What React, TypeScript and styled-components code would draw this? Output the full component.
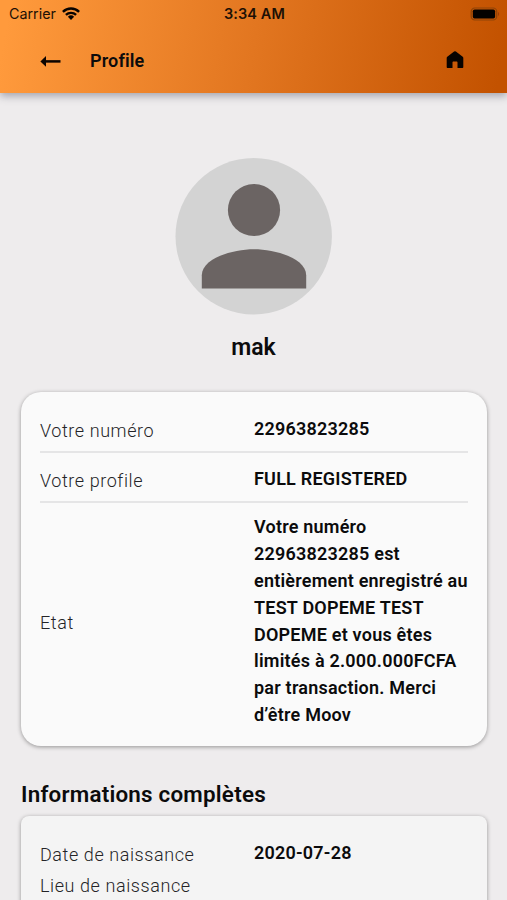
import React from 'react';
import styled, { createGlobalStyle } from 'styled-components';

const GlobalStyle = createGlobalStyle`
  *, *::before, *::after { box-sizing: border-box; }
  html, body { margin: 0; padding: 0; height: 100%; overflow: hidden; }
  body { background: #eeeced; font-family: Roboto, sans-serif; color: #0b0b0c; }
  #root { height: 100%; }
`;

const Screen = styled.div`
  height: 900px;
  display: flex;
  flex-direction: column;
  overflow: hidden;
  background: #eeeced;
`;

const TopBar = styled.header`
  flex: none;
  height: 93px;
  background: linear-gradient(100deg, #ff9a3c 2%, #e27620 50%, #c35200 98%);
  box-shadow: 0 3px 8px rgba(60, 60, 80, 0.42);
`;

const StatusBar = styled.div`
  height: 27px;
  padding: 0 7px 0 9px;
  display: grid;
  grid-template-columns: 1fr auto 1fr;
  align-items: center;
  font-family: Inter, sans-serif;
  color: #1d1005;
`;

const Carrier = styled.div`
  display: flex;
  align-items: center;
  gap: 6px;
  font-size: 14.3px;
`;

const Clock = styled.div`
  font-size: 14.5px;
  font-weight: 600;
  letter-spacing: 0.1px;
`;

const Battery = styled.svg`
  justify-self: end;
`;

const NavBar = styled.nav`
  height: 66px;
  padding: 0 43px 1px 40px;
  display: flex;
  align-items: center;
`;

const Title = styled.h1`
  margin: 1px auto 0 29px;
  font-size: 18px;
  line-height: 25px;
  font-weight: 600;
  letter-spacing: 0.15px;
`;

const Hero = styled.section`
  flex: none;
  height: 299px;
  padding-top: 65px;
  display: flex;
  flex-direction: column;
  align-items: center;
`;

const UserName = styled.h2`
  margin: 18px 0 0;
  font-size: 23px;
  line-height: 30px;
  font-weight: 600;
`;

const Card = styled.section<{ $compact?: boolean }>`
  flex: none;
  margin: 0 20px 0 21px;
  padding: ${(p) => (p.$compact ? '21px 19px 40px' : '11px 19px 0')};
  height: ${(p) => (p.$compact ? '160px' : '354px')};
  border-radius: ${(p) => (p.$compact ? '8px' : '20px')};
  background: ${(p) => (p.$compact ? '#f4f4f4' : '#fafafa')};
  box-shadow: 0 1px 4px rgba(0, 0, 0, 0.38);
`;

const Row = styled.div<{ $height: number; $divided?: boolean }>`
  height: ${(p) => p.$height}px;
  padding-top: ${(p) => (p.$divided ? '3px' : '0')};
  display: grid;
  grid-template-columns: 214px 1fr;
  align-items: center;
  border-bottom: ${(p) => (p.$divided ? '2px solid #e5e5e6' : '0')};
`;

const Label = styled.div`
  padding-top: 3px;
  font-size: 18px;
  line-height: 27px;
  font-weight: 300;
  letter-spacing: 0.58px;
  color: #242427;
`;

const Value = styled.div`
  padding-top: 2px;
  font-size: 18px;
  line-height: 26.9px;
  font-weight: 600;
  letter-spacing: 0.22px;
  white-space: pre;
`;

const SectionTitle = styled.h2`
  flex: none;
  margin: 33px 21px 7px;
  font-size: 22.4px;
  line-height: 30px;
  font-weight: 600;
  letter-spacing: 0.22px;
`;

const WifiIcon = () => (
  <svg width="18" height="14" viewBox="0 0 18 14" aria-hidden="true">
    <g fill="none" stroke="#080300" strokeWidth="2.4">
      <path d="M.9 4.8a11.6 11.6 0 0 1 16.2 0" />
      <path d="M3.9 7.9a7.4 7.4 0 0 1 10.2 0" />
    </g>
    <path d="M5.9 9.8a4.5 4.5 0 0 1 6.2 0L9 12.900z" fill="#080300" />
  </svg>
);

const BatteryIcon = () => (
  <Battery width="30" height="14" viewBox="0 0 30 14" aria-hidden="true">
    <rect x="1.2" y="1" width="25.5" height="12" rx="3.6" fill="none" stroke="#8f4408" strokeWidth="1.2" />
    <rect x="2.8" y="2.5" width="22.3" height="9" rx="1.8" fill="#050200" />
    <path d="M28 5v4c1.5-.6 1.5-3.4 0-4z" fill="#a03c06" />
  </Battery>
);

const BackIcon = () => (
  <svg width="21" height="14" viewBox="0 0 21 14" aria-hidden="true">
    <path d="M5 8.4h15.5" stroke="#0c0400" strokeWidth="2.5" />
    <path d="M6 3v10.8L.4 8.4z" fill="#0c0400" />
  </svg>
);

const HomeIcon = () => (
  <svg width="18" height="18" viewBox="0 0 18 18" aria-hidden="true">
    <path
      d="M8.1.6a1.4 1.4 0 0 1 1.8 0l6.8 5.1c.4.3.6.7.6 1.2v9.1c0 .7-.4 1.100-1.100 1.100h-4.700v-5.500c0-.6-.4-1-1-1h-3c-.6 0-1 .4-1 1v5.500H1.800c-.7 0-1.100-.4-1.100-1.100V6.900c0-.5.2-.9.6-1.200z"
      fill="#080300"
    />
  </svg>
);

const Avatar = () => (
  <svg width="157" height="157" viewBox="0 0 157 157" role="img" aria-label="Avatar">
    <circle cx="78.7" cy="78.3" r="78.200" fill="#d3d3d3" />
    <circle cx="79" cy="52" r="26.1" fill="#6b6463" />
    <path d="M26.800 130.500v-13.200c0-17 31-26.100 52.200-26.100s52.200 9.100 52.200 26.100v13.200z" fill="#6b6463" />
  </svg>
);

const STATUS_TEXT = `Votre numéro
22963823285 est
entièrement enregistré au
TEST DOPEME TEST
DOPEME et vous êtes
limités à 2.000.000FCFA
par transaction. Merci
d’être Moov`;

export default function App() {
  return (
    <>
      <GlobalStyle />
      <Screen>
        <TopBar>
          <StatusBar>
            <Carrier>
              Carrier
              <WifiIcon />
            </Carrier>
            <Clock>3:34 AM</Clock>
            <BatteryIcon />
          </StatusBar>
          <NavBar>
            <BackIcon />
            <Title>Profile</Title>
            <HomeIcon />
          </NavBar>
        </TopBar>
        <Hero>
          <Avatar />
          <UserName>mak</UserName>
        </Hero>
        <Card>
          <Row $height={50} $divided>
            <Label>Votre numéro</Label>
            <Value>22963823285</Value>
          </Row>
          <Row $height={50} $divided>
            <Label>Votre profile</Label>
            <Value>FULL REGISTERED</Value>
          </Row>
          <Row $height={235}>
            <Label>Etat</Label>
            <Value>{STATUS_TEXT}</Value>
          </Row>
        </Card>
        <SectionTitle>Informations complètes</SectionTitle>
        <Card $compact>
          <Row $height={31}>
            <Label>Date de naissance</Label>
            <Value>2020-07-28</Value>
          </Row>
          <Row $height={31}>
            <Label>Lieu de naissance</Label>
          </Row>
        </Card>
      </Screen>
    </>
  );
}
